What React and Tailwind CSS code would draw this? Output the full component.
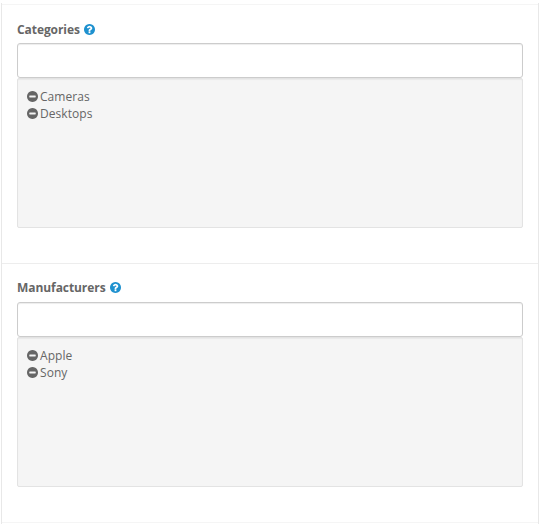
function MinusCircle() {
  return (
    <svg className="mr-[2px] h-[11px] w-[11px] shrink-0" viewBox="0 0 1536 1536" fill="currentColor">
      <path d="M1216 832v-128q0-26-19-45t-45-19h-768q-26 0-45 19t-19 45v128q0 26 19 45t45 19h768q26 0 45-19t19-45zm320-64q0 209-103 385.5t-279.5 279.5-385.5 103-385.5-103-279.5-279.5-103-385.5 103-385.5 279.5-279.5 385.5-103 385.5 103 279.5 279.5 103 385.5z" />
    </svg>
  );
}

function QuestionCircle() {
  return (
    <svg className="ml-1 h-[11px] w-[11px] shrink-0 text-[#1e91cf]" viewBox="128 128 1536 1536" fill="currentColor">
      <path d="M1024 1376v-192q0-14-9-23t-23-9h-192q-14 0-23 9t-9 23v192q0 14 9 23t23 9h192q14 0 23-9t9-23zm256-672q0-88-55.5-163t-138.5-116-170-41q-243 0-371 213-15 24 8 42l132 100q7 6 19 6 16 0 25-12 53-68 86-92 34-24 86-24 48 0 85.5 26t37.5 59q0 38-20 61t-68 45q-63 28-115.5 86.5t-52.5 125.5v36q0 14 9 23t23 9h192q14 0 23-9t9-23q0-19 21.5-49.5t54.5-49.5q32-18 49-28.5t46-35 44.5-48 28-60.5 12.5-81zm384 192q0 209-103 385.5t-279.5 279.5-385.5 103-385.5-103-279.5-279.5-103-385.5 103-385.5 279.5-279.5 385.5-103 385.5 103 279.5 279.5 103 385.5z" />
    </svg>
  );
}

function FilterGroup({ label, items }) {
  return (
    <section className="flex flex-col">
      <label className="flex h-[17px] items-center text-[12px] font-bold leading-[17px] tracking-[-0.07px]">
        {label}
        <QuestionCircle />
      </label>
      <input
        type="text"
        aria-label={label}
        className="mt-auto block h-[35px] w-full rounded-[3px] border border-[#ccc] bg-white px-3 shadow-[inset_0_1px_1px_rgba(0,0,0,0.075)] outline-none"
      />
      <div className="h-[150px] rounded-[2px] border border-[#e3e3e3] bg-[#f5f5f5] p-[9px] shadow-[inset_0_1px_1px_rgba(0,0,0,0.05)]">
        {items.map((item) => (
          <div key={item} className="flex h-[17px] items-center text-[12px] leading-[17px] tracking-[0.05px]">
            <MinusCircle />
            {item}
          </div>
        ))}
      </div>
    </section>
  );
}

export default function App() {
  return (
    <div className="h-[527px] w-[540px] bg-white px-px pt-[3px] font-['Open_Sans',sans-serif] text-[#666]">
      <main className="h-[521px] border-x border-[#e8e8e8] pt-px">
        <div className="border-y border-[#f5f5f5]">
          <div className="grid h-[258px] px-[15px] pb-[35px] pt-4">
            <FilterGroup label="Categories" items={["Cameras", "Desktops"]} />
          </div>
          <div className="grid h-[259px] border-t border-[#ededed] px-[15px] pb-[35px] pt-[15px]">
            <FilterGroup label="Manufacturers" items={["Apple", "Sony"]} />
          </div>
        </div>
      </main>
    </div>
  );
}
